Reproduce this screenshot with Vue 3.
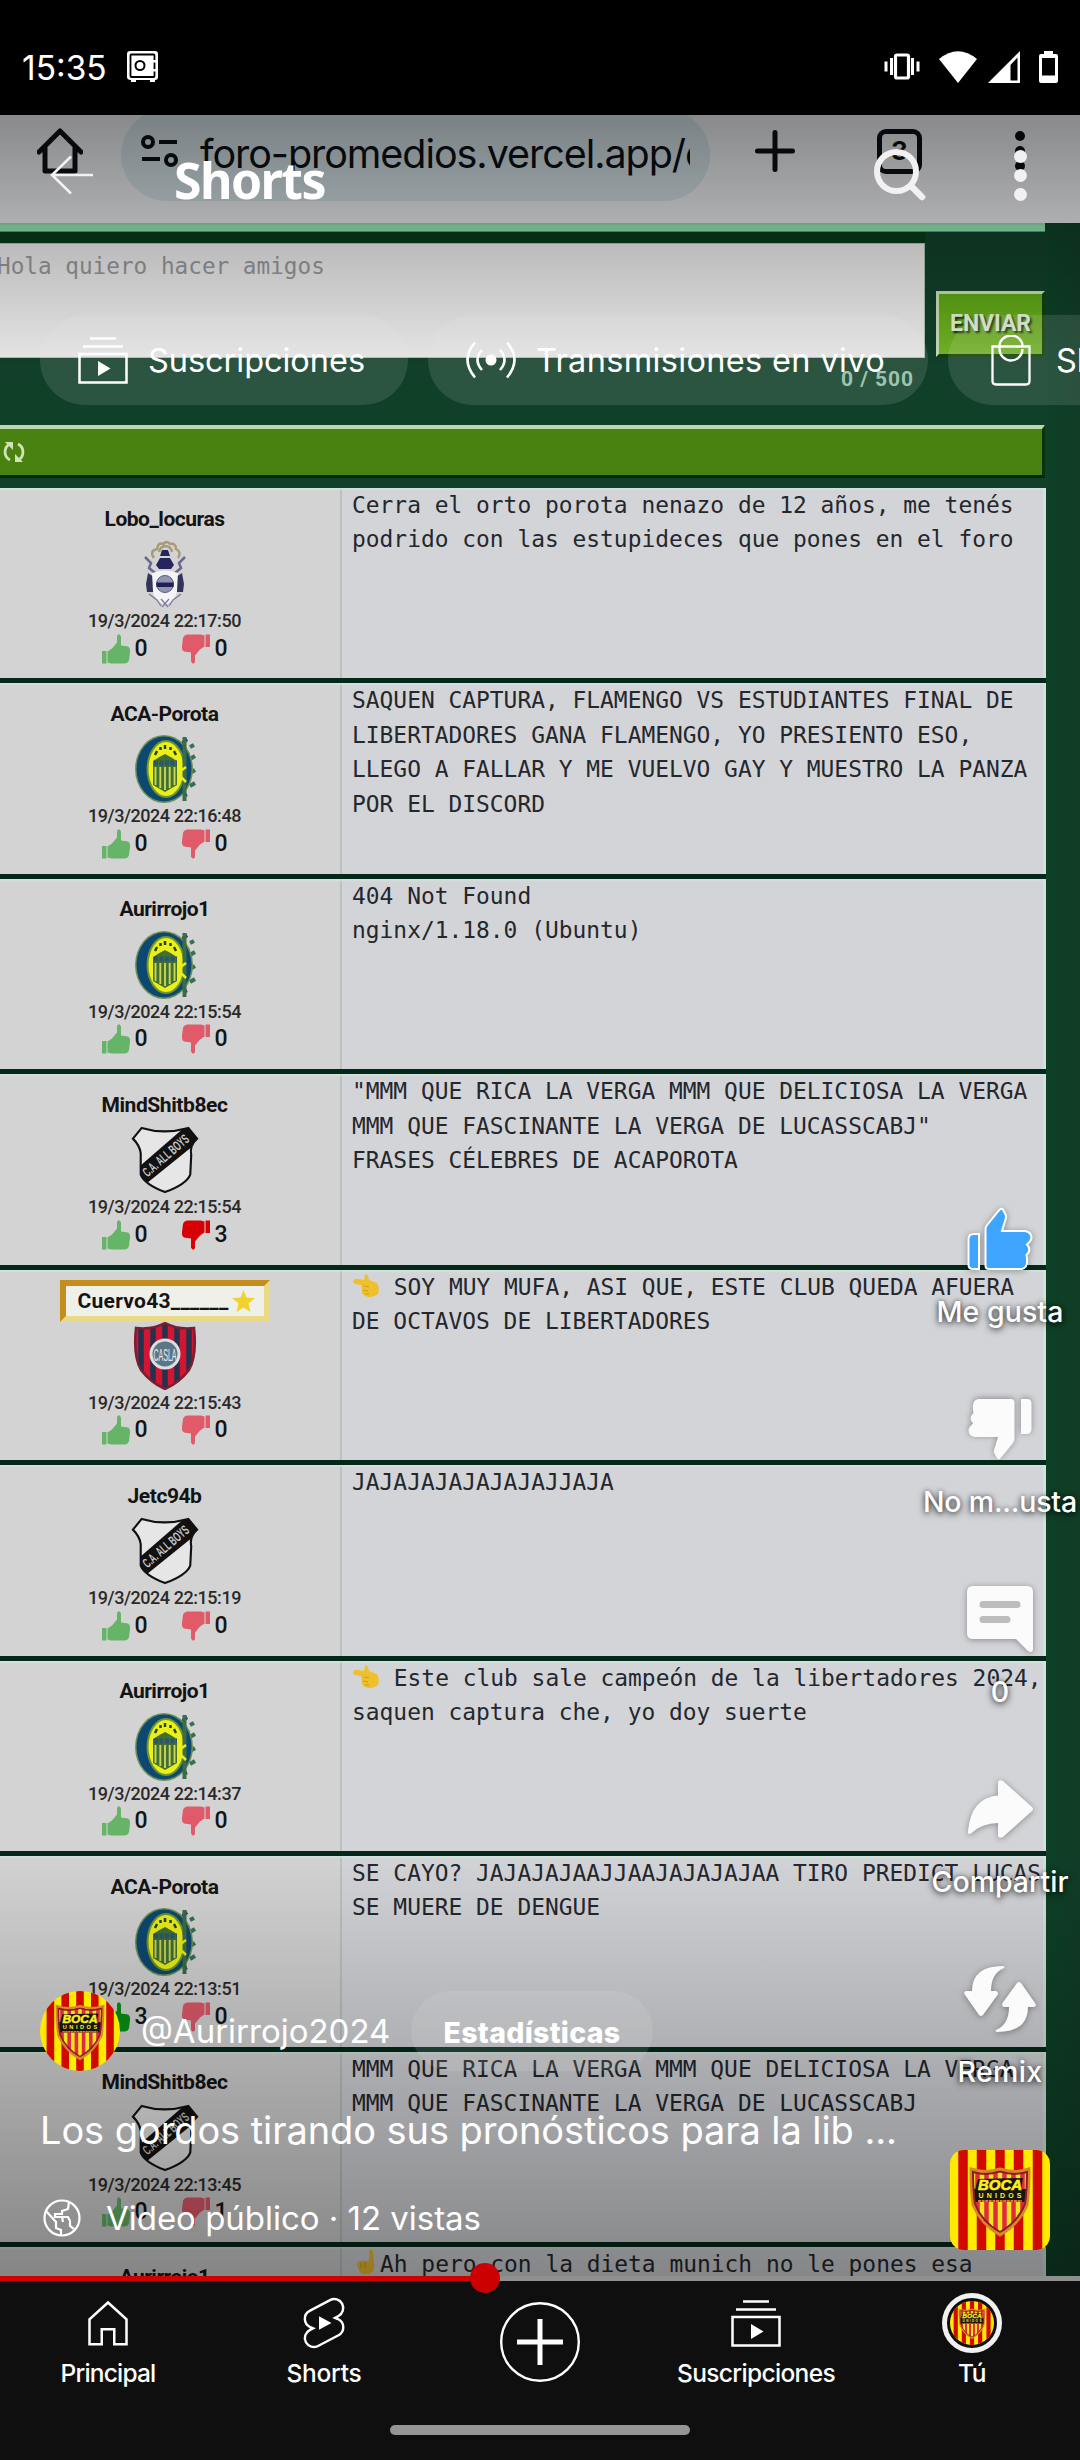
<script setup>
// Spreads a label's letters so that it fills a given width in pixels.
const vFit = {
  mounted(el, { value }) {
    const chars = [...el.textContent.trim()].length
    const natural = el.getBoundingClientRect().width
    el.style.letterSpacing = `${(value - natural) / chars}px`
  }
}

const posts = [
  { user: 'Lobo_locuras', w: 120, crest: 'gelp', date: '19/3/2024 22:17:50', up: 0, down: 0, lines: ['Cerra el orto porota nenazo de 12 años, me tenés', 'podrido con las estupideces que pones en el foro'] },
  { user: 'ACA-Porota', w: 108, crest: 'central', date: '19/3/2024 22:16:48', up: 0, down: 0, lines: ['SAQUEN CAPTURA, FLAMENGO VS ESTUDIANTES FINAL DE', 'LIBERTADORES GANA FLAMENGO, YO PRESIENTO ESO,', 'LLEGO A FALLAR Y ME VUELVO GAY Y MUESTRO LA PANZA', 'POR EL DISCORD'] },
  { user: 'Aurirrojo1', w: 90, crest: 'central', date: '19/3/2024 22:15:54', up: 0, down: 0, lines: ['404 Not Found', 'nginx/1.18.0 (Ubuntu)'] },
  { user: 'MindShitb8ec', w: 126, crest: 'allboys', date: '19/3/2024 22:15:54', up: 0, down: 3, hotDown: true, lines: ['"MMM QUE RICA LA VERGA MMM QUE DELICIOSA LA VERGA', 'MMM QUE FASCINANTE LA VERGA DE LUCASSCABJ"', 'FRASES CÉLEBRES DE ACAPOROTA'] },
  { user: 'Cuervo43______', w: 151, crest: 'casla', gold: true, date: '19/3/2024 22:15:43', up: 0, down: 0, emoji: 'left', lines: [' SOY MUY MUFA, ASI QUE, ESTE CLUB QUEDA AFUERA', 'DE OCTAVOS DE LIBERTADORES'] },
  { user: 'Jetc94b', w: 74, crest: 'allboys', date: '19/3/2024 22:15:19', up: 0, down: 0, lines: ['JAJAJAJAJAJAJAJJAJA'] },
  { user: 'Aurirrojo1', w: 90, crest: 'central', date: '19/3/2024 22:14:37', up: 0, down: 0, emoji: 'left', lines: [' Este club sale campeón de la libertadores 2024,', 'saquen captura che, yo doy suerte'] },
  { user: 'ACA-Porota', w: 108, crest: 'central', date: '19/3/2024 22:13:51', up: 3, down: 0, hotUp: true, lines: ['SE CAYO? JAJAJAJAAJJAAJAJAJAJAA TIRO PREDICT LUCAS', 'SE MUERE DE DENGUE'] },
  { user: 'MindShitb8ec', w: 126, crest: 'allboys', date: '19/3/2024 22:13:45', up: 0, down: 1, lines: ['MMM QUE RICA LA VERGA MMM QUE DELICIOSA LA VERGA', 'MMM QUE FASCINANTE LA VERGA DE LUCASSCABJ'] },
  { user: 'Aurirrojo1', w: 90, crest: 'central', date: '19/3/2024 22:13:40', up: 0, down: 0, emoji: 'up', lines: ['Ah pero con la dieta munich no le pones esa'] }
]
</script>

<template>
  <div class="phone">
    <svg class="defs" width="0" height="0">
      <defs>
        <symbol id="thumb" viewBox="0 0 28 30">
          <path d="M0 17h4.500v12.500H0zM5.500 17.500 10 14.500 15 8.500V2Q17-1.500 19 2.500V11.500L26 12.500Q28.500 14 28 18L27 26Q26 29.500 22 29.500H9L5.500 28.500Z" />
        </symbol>
        <symbol id="like" viewBox="0 0 66 64">
          <path d="M7 27h5v35H6q-4.500 0-4.500-4.500V32q0-5 5.500-5z" />
          <path d="M18.500 22Q18.500 20 20 18L31 4.500Q34.500-.500 36.500 3.500L39 8.500Q39.500 10.500 38 14L35 24H58Q64.500 25 64.500 31Q64 34 60 37.500Q65 43 59.500 48Q62 60.500 55 62H22Q18.500 62 18.500 58.500Z" />
        </symbol>
        <symbol id="subs" viewBox="0 0 50 47">
          <path d="M12 1.500h26M5 9.500h40M1.500 17h47v28.500h-47z" fill="none" stroke="#fff" stroke-width="2.500" />
          <path d="M20 24l12.500 7.500L20 39z" fill="#fff" />
        </symbol>
        <symbol id="gelp" viewBox="0 0 62 68">
          <path d="M20 18q-5-7 3-9q1-7 6-5q4-4 7 0q6-1 6 5q6 3 2 9M25 12q1-5 6-6q6 0 7 6" fill="none" stroke="#a89b78" stroke-width="2.500" />
          <path d="M28 10h6l2 6h-10zM26 18h10l4 7-3 4H25l-3-4z" fill="#26265e" />
          <path d="M11 17l6 6-2 5 6 5M51 17l-6 6 2 5-6 5" fill="none" stroke="#6a6990" stroke-width="2.500" />
          <path d="M14 33l6 4v15h-7l-1-8zM48 33l-6 4v15h7l1-8z" fill="#34345a" />
          <path d="M18 33q13-5 26 0l-1 18q0 8-12 14q-12-6-12-14z" fill="#f4f4f6" />
          <circle cx="31" cy="44" r="8.500" fill="#9496b1" stroke="#55567f" /><path d="M22.500 42.500h17v4.500h-17z" fill="#202058" />
          <path d="M15 54l8 6 4 6M47 54l-8 6-4 6M27 59l7 8M35 59l-7 8" fill="none" stroke="#7c7b9c" stroke-width="1.300" />
        </symbol>
        <symbol id="central" viewBox="0 0 62 68">
          <path d="M53 4q-8 5 0 14q-7 5 0 14q-7 6 0 15q-7 5-1 15" fill="none" stroke="#15466b" stroke-width="4" />
          <path d="M56 12l4-2M56 24l5-3M56 38l5-3M56 51l5-3" stroke="#35714e" stroke-width="4" />
          <ellipse cx="30" cy="34" rx="29" ry="34" fill="#6d9156" />
          <ellipse cx="30" cy="34" rx="27.500" ry="32.500" fill="#0d4870" />
          <ellipse cx="32" cy="34" rx="19.500" ry="29" fill="#6f9530" />
          <ellipse cx="32" cy="34" rx="17.500" ry="27" fill="#edf016" />
          <path d="M50.500 2v64" stroke="#3c6c45" stroke-width="4" />
          <path d="M19 26q6-4 12-7q6 3 12 7v24l-12 7-12-7z" fill="#43702d" />
          <path d="M21.500 32v18M26.300 32v21M31 32v23M35.700 32v21M40.500 32v18" stroke="#c8d45c" stroke-width="1.900" />
          <path d="M20 28h23" stroke="#2b5574" stroke-width="5" stroke-dasharray="4 1.500" />
          <path d="M21 20l2-4M26.500 15v-3M31 14v-4M36.500 15v-3M42 20l-2-4" stroke="#20451c" stroke-width="2.500" />
          <path d="M44 38l8-6M45 40l7 7" stroke="#e9ed18" stroke-width="2.500" />
        </symbol>
        <symbol id="allboys" viewBox="0 0 70 70">
          <clipPath id="abclip"><path d="M11 2Q34 9 59 2L68 13Q60 20 62 30L61 50Q57 60 35 68Q14 60 10 50L10 28Q9 20 2 13Z" /></clipPath>
          <path d="M11 2Q34 9 59 2L68 13Q60 20 62 30L61 50Q57 60 35 68Q14 60 10 50L10 28Q9 20 2 13Z" fill="#e6e6e6" />
          <g clip-path="url(#abclip)"><path d="M6 44L59-2L72 14L15 60Z" fill="#111" /></g>
          <path d="M11 2Q34 9 59 2L68 13Q60 20 62 30L61 50Q57 60 35 68Q14 60 10 50L10 28Q9 20 2 13Z" fill="none" stroke="#111" stroke-width="2.200" />
          <text x="0" y="0" transform="translate(17 53) rotate(-41)" textLength="58" lengthAdjust="spacingAndGlyphs" font-family="Liberation Sans" font-weight="bold" font-size="14" fill="#c4c4c4">C.A. ALL BOYS</text>
        </symbol>
        <symbol id="casla" viewBox="0 0 62 68">
          <clipPath id="slclip"><path d="M2 6Q18 8 31 1Q44 8 60 6Q63 34 55 48Q45 61 31 67Q17 61 7 48Q-1 34 2 6Z" /></clipPath>
          <g clip-path="url(#slclip)"><path d="M0 0h62v68H0z" fill="#d21632" /><path d="M7 0v68M19 0v68M31 0v68M43 0v68M55 0v68" stroke="#27304c" stroke-width="5.500" /></g>
          <path d="M2 6Q18 8 31 1Q44 8 60 6Q63 34 55 48Q45 61 31 67Q17 61 7 48Q-1 34 2 6Z" fill="none" stroke="#7d1d31" stroke-width="2.500" />
          <circle cx="31" cy="32" r="15.500" fill="#d9dfe3" /><circle cx="31" cy="32" r="12.500" fill="#5d7585" />
          <text x="31" y="38.500" text-anchor="middle" font-family="Liberation Sans" font-size="17" fill="#e8edf0" textLength="23" lengthAdjust="spacingAndGlyphs">CASLA</text>
        </symbol>
        <symbol id="boca" viewBox="0 0 100 100">
          <path d="M0 0h100v100H0z" fill="#ffea00" />
          <path d="M13 0v100M31.500 0v100M50 0v100M68.500 0v100M87.500 0v100" stroke="#d10900" stroke-width="9.500" />
          <clipPath id="boclip"><path d="M21 19Q36 24 50 19Q64 24 79 19Q79 40 77 55Q69 74 50 85Q31 74 23 55Q21 40 21 19Z" /></clipPath>
          <g clip-path="url(#boclip)"><path d="M20 15h60v75H20z" fill="#f3e51d" /><path d="M27.500 15v80M36.500 15v80M45.500 15v80M54.500 15v80M63.500 15v80M72.500 15v80" stroke="#e02b3e" stroke-width="4.500" /><path d="M20 39h60v13H20z" fill="#171513" /><path d="M28 29l45-1-2 12H25z" fill="#171513" /><path d="M28 51h44" stroke="#e3762a" stroke-width="2" stroke-dasharray="3 .6" /></g>
          <path d="M21 19Q36 24 50 19Q64 24 79 19Q79 40 77 55Q69 74 50 85Q31 74 23 55Q21 40 21 19Z" fill="none" stroke="#d8862c" stroke-width="3" />
          <path d="M23 22Q36 26 50 21.500Q64 26 77 22Q77 40 75 54Q68 72 50 82Q32 72 25 54Q23 40 23 22Z" fill="none" stroke="#8d1b25" stroke-width="2" />
          <text x="28" y="39.500" textLength="44" lengthAdjust="spacingAndGlyphs" font-family="Liberation Sans" font-weight="bold" font-style="italic" font-size="14" fill="#fff01c" stroke="#fff01c" stroke-width=".6">BOCA</text>
          <text x="28.500" y="47.500" textLength="43" lengthAdjust="spacing" font-family="Liberation Sans" font-weight="bold" font-size="7" fill="#fff01c">UNIDOS</text>
        </symbol>
      </defs>
    </svg>

    <header class="status">
      <span v-fit="80" class="clock">15:35</span>
      <svg class="safe" width="31" height="31" viewBox="0 0 31 31">
        <path d="M3 0h25q3 0 3 3v23q0 3-3 3v2h-5v-2H9v2H4v-2q-4 0-4-3V3q0-3 3-3z" fill="#fff" />
        <path d="M27.500 9V4.500q0-1-1-1h-22q-1 0-1 1V25q0 1 1 1h22q1 0 1-1v-4.500M27.500 11.500v6.500" fill="none" stroke="#000" stroke-width="1.800" />
        <circle cx="13" cy="14.500" r="4.500" fill="none" stroke="#000" stroke-width="2" />
      </svg>
      <div class="signals">
        <svg width="36" height="27" viewBox="0 0 36 27"><rect x="11.500" y="2" width="13" height="23" rx="1.500" fill="none" stroke="#fff" stroke-width="3.200" /><path d="M7.500 5v17M2 8.500v10M28.500 5v17M34 8.500v10" stroke="#fff" stroke-width="3" /></svg>
        <svg width="38" height="32" viewBox="0 0 38 32"><path d="M0 8Q19-7.500 38 8L19 32z" fill="#fff" /></svg>
        <svg width="32" height="32" viewBox="0 0 32 32"><path d="M32 0v32H0zM29.500 6.500L22.500 14v15.500h7z" fill="#fff" fill-rule="evenodd" /></svg>
        <svg width="19" height="32" viewBox="0 0 19 32"><path d="M5 0h9v3h3q2 0 2 2v25q0 2-2 2H2q-2 0-2-2V5q0-2 2-2h3zM3 7v17.500h13V7z" fill="#fff" fill-rule="evenodd" /></svg>
      </div>
    </header>

    <main class="player">
      <section class="browser">
        <div class="toolbar">
          <svg class="home" width="46" height="46" viewBox="0 0 46 46"><path d="M2 24L23 3l21 21M8 20v23h30V20" fill="none" stroke="#0b0f13" stroke-width="5" stroke-linejoin="round" stroke-linecap="round" /></svg>
          <div class="omnibox">
            <svg width="38" height="32" viewBox="0 0 38 32"><g fill="none" stroke="#0b0f13" stroke-width="4"><circle cx="7" cy="7" r="5" /><path d="M18 7h18M1 24h18" /><circle cx="30" cy="25" r="5" /></g></svg>
            <span class="url"><span v-fit="485">foro-promedios.vercel.app/</span><span>c</span></span>
          </div>
          <svg class="plus" width="40" height="42" viewBox="0 0 40 42"><path d="M20 2.500v37M2.500 21h35" stroke="#0b0f13" stroke-width="5" stroke-linecap="round" /></svg>
          <span class="tabs">3</span>
          <span class="kebab"><i /><i /><i /></span>
        </div>
        <div class="page">
          <div class="stripe" />
          <div class="composer">
            <div class="textarea"><span>Hola quiero hacer amigos</span></div>
            <div class="enviar"><span v-fit="81">ENVIAR</span></div>
          </div>
          <div class="counter"><span v-fit="73">0 / 500</span></div>
          <div class="refresh">
            <svg width="22" height="22" viewBox="0 0 22 22"><path d="M8 2.500A9 9 0 0 0 7 19M14 19.500A9 9 0 0 0 15 3" fill="none" stroke="#cfe3b4" stroke-width="2.800" /><path d="M2 1h8v8zM20 21h-8v-8z" fill="#cfe3b4" /></svg>
          </div>
          <article v-for="(p, i) in posts" :key="i" class="post">
            <div class="author">
              <div class="who">
                <span v-if="p.gold" class="gold">
                  <b v-fit="p.w">{{ p.user }}</b>
                  <svg width="23" height="22" viewBox="0 0 23 22"><path d="M11.500 0l3 7.500 8.500.5-6.500 5.500 2 8.500-7-4.500-7 4.500 2-8.500L0 8l8.500-.5z" fill="#f2d32c" /></svg>
                </span>
                <b v-else v-fit="p.w">{{ p.user }}</b>
              </div>
              <svg class="crest" width="70" height="68"><use :href="'#' + p.crest" width="70" height="68" /></svg>
              <div class="date"><span v-fit="153">{{ p.date }}</span></div>
              <div class="votes">
                <svg :class="['up', { hot: p.hotUp }]" width="28" height="30"><use href="#thumb" /></svg><span class="n first">{{ p.up }}</span>
                <svg :class="['down', { hot: p.hotDown }]" width="28" height="30"><use href="#thumb" /></svg><span class="n">{{ p.down }}</span>
              </div>
            </div>
            <div class="message">
              <div v-for="(l, j) in p.lines" :key="j" class="line"><svg v-if="j === 0 && p.emoji === 'left'" class="emoji" width="28" height="24" viewBox="0 0 28 24"><path d="M1 7Q2 4 6 5L12 6L13 1Q15-1 16 2L17 6L25 9Q28 14 26 20Q20 25 13 22Q9 20 10 16L9 11L3 10Q1 9 1 7Z" fill="#edc02c" /><path d="M12 12l5 1M11 16l5 1M13 20l4 0" stroke="#d09b1e" /></svg><svg v-if="j === 0 && p.emoji === 'up'" class="emoji" width="28" height="26" viewBox="0 0 28 26"><path d="M17 2Q20-1 21 3L22 14Q23 22 19 24Q12 27 8 23L5 17Q5 12 9 12L17 12Z" fill="#edc02c" /><path d="M9 14v5M13 13v6" stroke="#d09b1e" /></svg>{{ l }}</div>
            </div>
          </article>
        </div>
      </section>

      <div class="shade" />

      <section class="overlay">
        <div class="topbar">
          <svg width="44" height="40" viewBox="0 0 44 40"><path d="M43 20H2M21 1.500L2 20l19 18.500" fill="none" stroke="#f1f1f1" stroke-width="2.600" /></svg>
          <h1><span v-fit="151">Shorts</span></h1>
          <svg width="52" height="52" viewBox="0 0 52 52"><circle cx="22.500" cy="22.500" r="19.500" fill="none" stroke="#f1f1f1" stroke-width="6" /><path d="M37 37l11 11" stroke="#f1f1f1" stroke-width="6.500" stroke-linecap="round" /></svg>
          <span class="dots"><i /><i /><i /></span>
        </div>
        <div class="chips">
          <div class="chip c1"><svg width="50" height="47"><use href="#subs" /></svg><span v-fit="217">Suscripciones</span></div>
          <div class="chip c2"><svg width="50" height="38" viewBox="0 0 50 38"><circle cx="25" cy="19" r="5.500" fill="#fff" /><path d="M16 9q-9 10 0 20M34 9q9 10 0 20M9 1.500q-15 17 0 35M41 1.500q15 17 0 35" fill="none" stroke="#fff" stroke-width="2.600" /></svg><span v-fit="349">Transmisiones en vivo</span></div>
          <div class="chip c3"><svg width="40" height="51" viewBox="0 0 40 51"><path d="M1.500 11.500h37V46q0 3.500-3.500 3.500H5Q1.500 49.500 1.500 46zM8.500 11.500V14a11.500 11.500 0 0 0 23 0M8.500 11a11.500 10.500 0 0 1 23 0" fill="none" stroke="#fff" stroke-width="2.300" /></svg><span>Shopping</span></div>
        </div>

        <div class="actions">
          <div class="action"><svg class="liked" width="66" height="64"><use href="#like" /></svg><span v-fit="127">Me gusta</span></div>
          <div class="action"><svg class="flip" width="66" height="64"><use href="#like" /></svg><span v-fit="154">No m...usta</span></div>
          <div class="action"><svg width="66" height="66" viewBox="0 0 66 66"><path d="M6 0h54q6 0 6 6v56q0 6-5 3L49 53H6q-6 0-6-6V6q0-6 6-6z" /><path d="M16 18.500h34M16 33.500h24" stroke="#bdbdc0" stroke-width="7" stroke-linecap="round" /></svg><span>0</span></div>
          <div class="action"><svg width="66" height="58" viewBox="0 0 66 58"><path d="M31 3q0-4 5-2l29 26q2 2 0 4L36 57q-5 2-5-2V43Q15 43 4 53.500Q.500 55 1 51Q4 18 31 15.500z" /></svg><span v-fit="137">Compartir</span></div>
          <div class="action"><svg width="72" height="66" viewBox="0 0 72 66"><path id="rmx" d="M39 0q3 1 0 2.500Q27 8 27 25h5q3 1 1.500 4L19 49q-2 2-4 0L1 29q-2-3 1-4h6Q8 0 39 0z" /><use href="#rmx" transform="rotate(180 36 33)" /></svg><span v-fit="85">Remix</span></div>
          <svg class="tile" width="100" height="100"><use href="#boca" /></svg>
        </div>

        <div class="info">
          <div class="channel">
            <svg class="avatar" width="80" height="80"><use href="#boca" /></svg>
            <span v-fit="250" class="handle">@Aurirrojo2024</span>
            <span class="stats"><span v-fit="177">Estadísticas</span></span>
          </div>
          <div class="title"><span v-fit="857">Los gordos tirando sus pronósticos para la lib ...</span></div>
          <div class="meta">
            <svg width="38" height="38" viewBox="0 0 38 38"><circle cx="19" cy="19" r="17.500" /><path d="M3 12L13 23V29L18 31V37M26 3L25 10L19 12V15H12V18L19 18L20 23M20 18H25L27 22V27L31 30" /></svg>
            <span v-fit="375">Video público · 12 vistas</span>
          </div>
        </div>
      </section>
      <div class="progress"><i /></div>
    </main>

    <nav class="nav">
      <div class="tab"><svg width="60" height="60" viewBox="0 0 24 24"><path d="M4.600 20.500v-10L12 3.800l7.400 6.700v10h-4.900v-6h-5v6z" fill="none" stroke="#fff" /></svg><span v-fit="95">Principal</span></div>
      <div class="tab"><svg width="60" height="60" viewBox="0 0 24 24"><path d="M10 14.650v-5.300L15 12z" fill="#fff" /><path transform="translate(.5 .5) scale(.96)" d="M17.770 10.320l-1.200-.5L18 9.060c1.840-.96 2.530-3.230 1.560-5.060s-3.240-2.530-5.070-1.560L6 6.940c-1.290.68-2.070 2.040-2 3.490.07 1.420.93 2.670 2.220 3.250.03.010 1.200.5 1.200.5L6 14.930c-1.830.97-2.530 3.240-1.560 5.070.97 1.830 3.240 2.530 5.070 1.560l8.500-4.500c1.290-.68 2.060-2.040 1.990-3.490-.07-1.420-.94-2.680-2.230-3.250z" fill="none" stroke="#fff" /></svg><span v-fit="75">Shorts</span></div>
      <div class="tab create"><svg width="80" height="80" viewBox="0 0 80 80"><circle cx="40" cy="40" r="38.800" fill="none" stroke="#fff" stroke-width="2.400" /><path d="M40 17v46M17 40h46" stroke="#fff" stroke-width="5" /></svg></div>
      <div class="tab"><svg width="60" height="60" viewBox="-5 -7 60 60"><use href="#subs" width="50" height="47" /></svg><span v-fit="158">Suscripciones</span></div>
      <div class="tab"><span class="me"><svg width="44" height="44"><use href="#boca" /></svg></span><span v-fit="28">Tú</span></div>
      <div class="gesture" />
    </nav>
  </div>
</template>

<style>
body { margin: 0; background: #000; }
</style>

<style scoped>
.phone { width: 1080px; height: 2460px; background: #000; overflow: hidden; color: #fff; font-family: Inter, "Open Sans", sans-serif; position: relative; }
.phone span { white-space: nowrap; }
.defs { position: absolute; }
svg { display: block; flex: none; }
.status { height: 115px; display: flex; box-sizing: border-box; padding: 20px 22px 0; align-items: center; }
.clock { font-size: 33.500px; line-height: 40px; width: 80px; margin-top: 0; }
.safe { margin-left: 25px; margin-top: -2px; }
.signals { margin-left: auto; display: flex; align-items: center; gap: 19px; margin-top: -2px; }
.signals svg:nth-child(3) { margin-left: -8px; }

.player { position: relative; height: 2166px; z-index: 1; }
.browser { height: 2166px; overflow: hidden; }
.toolbar { height: 108px; box-sizing: border-box; background: #e4e5e7; display: flex; align-items: center; padding: 0 0 36px 37px; color: #0b0f13; }
.omnibox { width: 589px; height: 92px; margin: 8px 0 0 38px; box-sizing: border-box; border-radius: 46px; background: #cbd8dd; display: flex; align-items: center; padding: 0 19px 0 20px; flex: none; }
.omnibox svg { margin-top: -8px; }
.url { display: flex; width: 490px; overflow: hidden; margin-left: 21px; margin-top: -3px; font-size: 39.500px; line-height: 60px; }
.plus { margin-left: 45px; }
.tabs { margin-left: 82px; width: 45px; height: 45px; box-sizing: border-box; border: 5px solid #0b0f13; border-radius: 9px; text-align: center; font: 700 26px/34px Inter; }
.kebab { margin-left: 93px; display: flex; flex-direction: column; gap: 5px; }
.kebab i { width: 10px; height: 10px; border-radius: 50%; background: #0b0f13; }
.page { background: linear-gradient(90deg, #114029, #114029 1046px, #0d4026 1050px, #113c26); height: 2058px; font-family: Roboto, sans-serif; }
.stripe { width: 1045px; height: 9px; background: linear-gradient(#a5bfb0, #8fe8b0 3px, #8fe8b0 8px, #1b5c38); }
.composer { display: flex; height: 115px; padding-top: 11px; background: linear-gradient(90deg, #073b1b 925px, transparent 925px) no-repeat 0 0 / 100% 11px; }
.textarea { width: 925px; box-sizing: border-box; height: 115px; background: #ebebeb; border: 1px solid #a8c4b3; border-left: 0; padding: 5px 0 0; overflow: hidden; }
.textarea span { display: block; margin-left: -3px; font: 22.700px/34px "DejaVu Sans Mono", monospace; color: #96989b; white-space: pre; }
.enviar { margin: 48px 0 0 11px; width: 109px; height: 66px; box-sizing: border-box; border: 3px solid; border-color: #c6deb6 #123f0a #123f0a #c6deb6; background: linear-gradient(#5ca512, #73b627); text-align: center; line-height: 59px; font-weight: 700; font-size: 23px; color: #e2efd6; text-shadow: 2px 2px 2px #123406; }
.counter { height: 67px; width: 914px; text-align: right; font-weight: 700; font-size: 21px; line-height: 42px; color: #93bfa5; }
.refresh { width: 1045px; height: 53px; box-sizing: border-box; background: #4a8212; border: solid; border-width: 4px 3px 3px 0; border-color: #bcd8b0 #0a3210 #052708 #0a3210; display: flex; align-items: center; padding-left: 3px; margin-bottom: 10px; }
.post { width: 1045.500px; height: 195.450px; box-sizing: border-box; display: flex; border-bottom: 5px solid #04291a; background: linear-gradient(#d2e4da, transparent 3px), linear-gradient(90deg, #d3d3d3 340px, #b9c3bd 340px, #b9c3bd 342px, #d3d4d8 342px, #d3d4d8 1043px, #cfe4d8 1043px); }
.author { width: 341px; box-sizing: border-box; padding-right: 12px; display: flex; flex-direction: column; align-items: center; color: #141414; flex: none; }
.who { height: 61px; margin-bottom: -9px; display: flex; align-items: center; font-size: 21px; flex: none; }
.who b { font-weight: 700; }
.gold { display: flex; align-items: center; gap: 3px; box-sizing: border-box; width: 210px; height: 42px; margin-top: 2px; border: 6px solid; border-color: #c48e1c #ead985 #ead985 #c48e1c; background: #f0f0ea; padding-left: 12px; }
.crest { height: 68px; }
.date { height: 24px; line-height: 25px; font-size: 18px; font-weight: 500; color: #2a2a2a; }
.votes { display: flex; align-items: center; height: 33px; width: 126px; flex: none; }
.up { fill: #66b468; }
.up.hot { fill: #079214; }
.down { fill: #e05a6a; transform: rotate(180deg); }
.down.hot { fill: #d60005; }
.n { font-size: 23px; line-height: 30px; font-weight: 500; margin-left: 5px; width: 13px; }
.n.first { width: 48px; }
.message { padding-left: 11px; font: 22.900px/34.400px "DejaVu Sans Mono", monospace; color: #24272c; }
.line { white-space: pre; height: 34.400px; }
.emoji { display: inline-block; vertical-align: -3px; }

.shade { position: absolute; inset: 0; background: linear-gradient(rgba(0,0,0,.4), transparent 265px, transparent 1735px, rgba(0,0,0,.37) 2163px); }
.overlay { position: absolute; inset: 0; overflow: hidden; }
.topbar { height: 120px; display: flex; align-items: center; padding: 0 53px 0 50px; }
h1 { margin: 10px 0 0 80px; width: 700px; font: 700 50px/60px "Noto Sans", sans-serif; }
.dots { margin-left: auto; display: flex; flex-direction: column; gap: 6px; }
.dots i { width: 13px; height: 13px; border-radius: 50%; background: #f1f1f1; }
.chips { margin-top: 80px; display: flex; gap: 20px; padding-left: 40px; font-size: 32.500px; }
.chip { height: 90px; border-radius: 45px; background: rgba(235,235,235,.12); display: flex; align-items: center; box-sizing: border-box; padding-left: 38px; gap: 20px; flex: none; }
.c1 { width: 368px; }
.c2 { width: 500px; }
.c3 { width: 280px; padding-left: 43px; gap: 25px; }

.actions { position: absolute; left: 920px; top: 1082px; width: 160px; display: flex; flex-direction: column; align-items: center; }
.action { height: 190px; display: flex; flex-direction: column; align-items: center; justify-content: flex-start; }
.action svg { margin: auto 0; fill: #fbfbfb; filter: drop-shadow(0 1px 3px rgba(0,0,0,.35)); overflow: visible; }
.action::after { content: ""; order: 3; height: 55px; flex: none; }
.action span { font-size: 28.500px; line-height: 40px; height: 40px; font-weight: 500; text-shadow: 0 2px 7px rgba(0,0,0,.75), 0 0 4px rgba(0,0,0,.35); margin-top: 12px; }
.action .liked { fill: #3ea6ff; stroke: #fff; stroke-width: 2; }
.action .flip { transform: rotate(180deg); }
.tile { border-radius: 14px; margin-top: 3px; }

.info { position: absolute; left: 40px; top: 1876px; }
.channel { display: flex; align-items: center; height: 80px; }
.avatar { border-radius: 50%; }
.handle { font-size: 33px; margin-left: 21px; width: 250px; }
.stats { margin-left: 20px; width: 242px; height: 80px; border-radius: 40px; background: rgba(235,235,235,.12); text-align: center; font-weight: 800; font-size: 28.500px; line-height: 83px; }
.title { font-size: 38px; line-height: 60px; margin-top: 29px; }
.meta { display: flex; align-items: center; height: 50px; margin-top: 33px; font-size: 33px; padding-left: 3px; gap: 25px; }
.meta svg { fill: none; stroke: #fff; stroke-width: 2.200; }

.progress { position: absolute; left: 0; right: 0; bottom: 0; height: 5px; background: linear-gradient(90deg, #cc0000 485px, #8f8f8f 485px); }
.progress i { position: absolute; left: 470px; top: -13px; width: 30px; height: 30px; border-radius: 50%; background: #cc0000; }

.nav { height: 179px; background: #0f0f0f; display: flex; flex-wrap: wrap; align-content: flex-start; }
.tab { width: 216px; height: 144px; display: flex; flex-direction: column; align-items: center; padding-top: 12px; box-sizing: border-box; font-size: 24.500px; font-weight: 500; }
.tab > span:last-child { line-height: 32px; margin-top: 4px; }
.create { padding-top: 21px; }
.me { width: 60px; height: 60px; border-radius: 50%; box-sizing: border-box; border: 5px solid #f1f1f1; display: flex; align-items: center; justify-content: center; }
.me svg { border-radius: 50%; }
.gesture { width: 300px; height: 10px; border-radius: 5px; background: #959595; margin: 0 390px; }
</style>
